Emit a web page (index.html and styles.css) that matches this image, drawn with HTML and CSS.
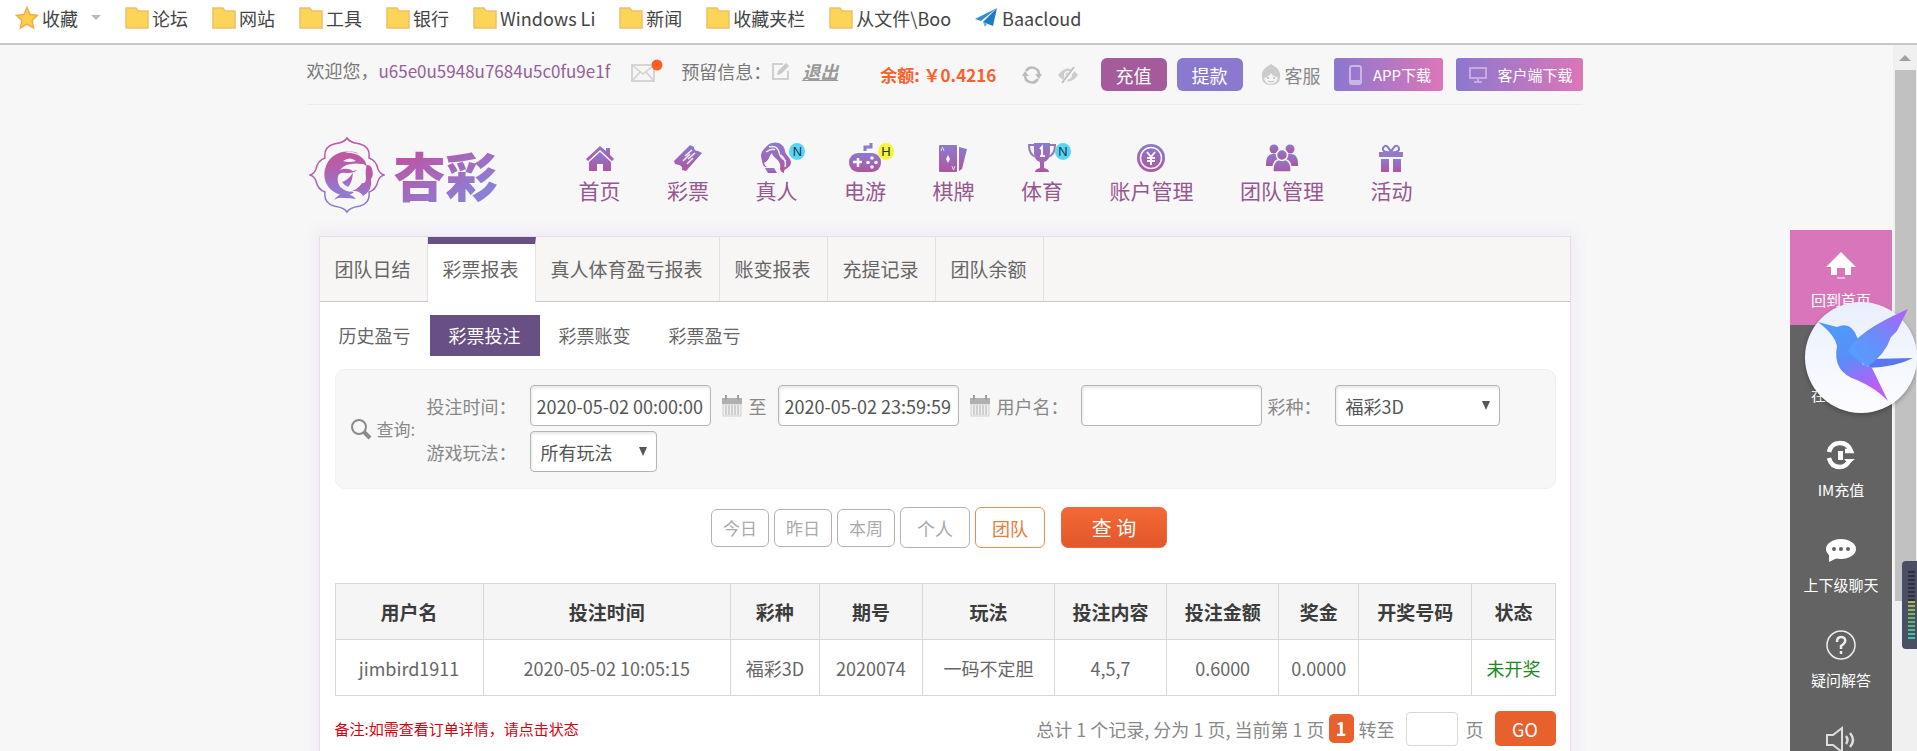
FILE: index.html
```html
<!DOCTYPE html>
<html lang="zh-CN">
<head>
<meta charset="utf-8">
<title>杏彩</title>
<link rel="stylesheet" href="styles.css">
</head>
<body>
<svg class="defs" aria-hidden="true">
  <defs>
    <linearGradient id="g" x1="0" y1="0" x2="0" y2="1"><stop offset="0" stop-color="#8a7bd0"/><stop offset="1" stop-color="#b0559f"/></linearGradient>
    <linearGradient id="gl" x1="0" y1="0" x2="0" y2="1"><stop offset="0" stop-color="#c2559d"/><stop offset=".5" stop-color="#b063b4"/><stop offset="1" stop-color="#8b7fd6"/></linearGradient>
    <linearGradient id="gb" x1="0" y1="0" x2=".4" y2="1"><stop offset="0" stop-color="#4a9ffb"/><stop offset=".55" stop-color="#5b8cf8"/><stop offset="1" stop-color="#c05cf5"/></linearGradient>
    <linearGradient id="gw" x1="0" y1="1" x2="1" y2="0"><stop offset="0" stop-color="#4fa3ff"/><stop offset=".5" stop-color="#6a8cfb"/><stop offset="1" stop-color="#b45ff5"/></linearGradient>
    <symbol id="folder" viewBox="0 0 24 22"><path d="M1 1h10l2 3h10v17H1z" fill="#fbd458" stroke="#f0c068" stroke-width="1.500"/></symbol>
    <symbol id="cal" viewBox="0 0 20 22"><path d="M1 9h18v12H1z" fill="#f0f0f0" stroke="#d0d0d0"/><path d="M0 3h20v6H0z" fill="#b0b0b0"/><path d="M4 0v5M16 0v5" stroke="#a0a0a0" stroke-width="2"/><path d="M4 10v10M7 10v10M10 10v10M13 10v10M16 10v10" stroke="#d0d0d0" stroke-width="2"/></symbol>
  </defs>
</svg>

<nav class="bookmarks">
  <a class="bm bm-star" href="#"><svg width="24" height="24" viewBox="0 0 24 24"><path d="M12 1.500l3.200 7 7.300.9-5.400 5.100 1.500 7.500-6.600-3.800L5.400 22l1.500-7.500L1.500 9.400l7.300-.9z" fill="#fcce4c" stroke="#eeae4a" stroke-width="1.500"/></svg>收藏<span class="caret"></span></a>
  <a class="bm" href="#"><svg width="24" height="22"><use href="#folder"/></svg>论坛</a>
  <a class="bm" href="#"><svg width="24" height="22"><use href="#folder"/></svg>网站</a>
  <a class="bm" href="#"><svg width="24" height="22"><use href="#folder"/></svg>工具</a>
  <a class="bm" href="#"><svg width="24" height="22"><use href="#folder"/></svg>银行</a>
  <a class="bm" href="#"><svg width="24" height="22"><use href="#folder"/></svg>Windows Li</a>
  <a class="bm" href="#"><svg width="24" height="22"><use href="#folder"/></svg>新闻</a>
  <a class="bm" href="#"><svg width="24" height="22"><use href="#folder"/></svg>收藏夹栏</a>
  <a class="bm" href="#"><svg width="24" height="22"><use href="#folder"/></svg>从文件\Boo</a>
  <a class="bm" href="#"><svg width="24" height="22" viewBox="0 0 24 22"><path d="M22 1L0 12l6 2z" fill="#2f8fd0"/><path d="M22 1L8 15l10 4z" fill="#1f7cc0"/><path d="M8 15l2 5 2-3z" fill="#5aaee2"/></svg>Baacloud</a>
</nav>

<div class="view">
  <div class="page">
    <div class="wrap">
      <div class="topbar">
        <span class="hello">欢迎您，<a class="user" href="#">u65e0u5948u7684u5c0fu9e1f</a></span>
        <svg class="mail" width="34" height="24" viewBox="0 0 34 24"><path d="M1 6h22v16H1z" fill="#f5f5f5" stroke="#d5d5d5" stroke-width="2"/><path d="M1 6l11 9 11-9M1 22l8-9M23 22l-8-9" fill="none" stroke="#d0d0d0" stroke-width="1.500"/><circle cx="26" cy="6" r="5.500" fill="#fb5f25"/></svg>
        <span class="reserve">预留信息：</span>
        <svg class="edit" width="18" height="18" viewBox="0 0 18 18"><path d="M11 2H1v15h15V9" fill="none" stroke="#d0d0d0" stroke-width="2"/><path d="M5 13l1-4 8-8 3 3-8 8z" fill="#cacaca"/></svg>
        <a class="logout" href="#">退出</a>
        <strong class="balance">余额: ￥0.4216</strong>
        <svg class="refresh" width="20" height="18" viewBox="0 0 20 18"><path d="M4 5a7 7 0 0 1 13 4M16 13A7 7 0 0 1 3 9" fill="none" stroke="#bbb" stroke-width="2.500"/><path d="M13 8h7l-3 5zM0 10h7L3 5z" fill="#bbb"/></svg>
        <svg class="eye" width="22" height="18" viewBox="0 0 22 18"><path d="M1 9q10-13 20 0-10 13-20 0z" fill="#ccc"/><circle cx="11" cy="9" r="4" fill="#f7f7f7"/><circle cx="11" cy="9" r="2.500" fill="#ccc"/><path d="M6 17L18 1" stroke="#f7f7f7" stroke-width="4"/><path d="M5 17L17 1" stroke="#c0c0c0" stroke-width="2"/></svg>
        <button class="btn recharge">充值</button>
        <button class="btn withdraw">提款</button>
        <a class="service" href="#"><svg width="20" height="22" viewBox="0 0 20 22"><path d="M1 13C0 5 6 3 10 0c4 3 10 5 9 13q0 8-9 8t-9-8z" fill="#cbcbcb"/><path d="M3 14q5-1 7-5 2 4 7 4-1 7-7 7t-7-6z" fill="#f4f4f4"/><circle cx="7" cy="14" r="1" fill="#bbb"/><circle cx="13" cy="14" r="1" fill="#bbb"/><path d="M7 17q3 2 6 0" fill="none" stroke="#bbb"/></svg>客服</a>
        <button class="btn dl dl-app"><svg width="14" height="20" viewBox="0 0 14 20"><rect x="1" y="1" width="11" height="18" rx="2" fill="none" stroke="#c9b5e6" stroke-width="2"/><path d="M1 15h11v3H1z" fill="#c9b5e6"/></svg>APP下载</button>
        <button class="btn dl dl-pc"><svg width="18" height="16" viewBox="0 0 18 16"><path d="M1 1h16v10H1zM9 11v4M5 15h8" fill="none" stroke="#c9a9e0" stroke-width="2"/></svg>客户端下载</button>
      </div>

      <header class="head">
        <a class="logo" href="#">
          <svg width="76" height="76" viewBox="0 0 76 76"><path d="M38 1c3 5 8 5 13 6 7 2 10 7 9 14 6 2 8 6 9 11 1 3 3 5 6 6-3 1-5 3-6 6-1 5-3 9-9 11 1 7-2 12-9 14-5 1-10 1-13 6-3-5-8-5-13-6-7-2-10-7-9-14-6-2-8-6-9-11-1-3-3-5-6-6 3-1 5-3 6-6 1-5 3-9 9-11-1-7 2-12 9-14 5-1 10-1 13-6z" fill="none" stroke="url(#gl)" stroke-width="1.500"/><path d="M50 17C38 11 20 15 16 32c-3 13 5 23 16 26 6 1 10 0 13-3-12 0-18-7-16-16 1-3 4-4 8-3 4 0 8 0 11-3l-4 1q-6-4-13-1 6-8 22-6c3 0 4 2 5 3-1-10-12-15-22-14 4-2 9-2 14 1z" fill="url(#gl)"/><path d="M34 24q7-5 13 0-7 2-13 0z" fill="#f7f7f7"/><path d="M44 36q-1 10-5 14-4-2-6-5 5-1 11-9z" fill="url(#gl)"/><path d="M58 28q4 0 5 4 2 6-1 10 2 11-8 17-3-5-9-5-5 0-10 3 8 0 12 5-6-1-12-1-6-1-10 2 5-7 14-8 10-2 14-9 4 1 4-5-1-9 1-13z" fill="url(#gl)"/></svg>
          <span class="brand">杏彩</span>
        </a>
        <nav class="menu">
          <a href="#"><svg width="30" height="26" viewBox="0 0 30 26"><path d="M15 1L1 14l2 2L15 5l12 11 2-2-4-4V3h-4v3z" fill="url(#g)"/><path d="M4 17L15 7l11 10v9h-8v-7h-6v7H4z" fill="url(#g)"/></svg>首页</a>
          <a href="#"><svg width="30" height="28" viewBox="0 0 30 28"><path d="M1 17L17 1l4 2q0 4 4 4l4 2-16 18-4-1q1-4-3-5l-4-1z" fill="url(#g)"/><path d="M12 12l7-6M15 15l7-6M10 17l7-7M14 20l6-6" fill="none" stroke="#f7f7f7" stroke-width="1.500"/></svg>彩票</a>
          <a href="#"><svg width="32" height="32" viewBox="0 0 32 32"><path d="M8 3C15-2 24 1 25 9c1 5 6 6 6 12-1 6-8 5-7 10-6-2-3-6-4-9-2-6-7-6-8-11-3 3-3 8-8 10q1 3 3 4-4 1-5-6l-1-5C1 9 5 6 8 3z" fill="url(#g)"/><path d="M9 5q8-2 10 5 1 6 7 9M6 10q6-4 9-2M21 13q6 6 4 12" fill="none" stroke="#eee" stroke-width="1.500"/><path d="M5 26h9l3 5H8z" fill="url(#g)"/></svg><i class="badge badge-n">N</i>真人</a>
          <a href="#"><svg width="32" height="32" viewBox="0 0 32 32"><path d="M16 9V5h6V1" fill="none" stroke="#8a7bd0" stroke-width="3"/><rect x="0" y="11" width="32" height="19" rx="9" fill="url(#g)"/><path d="M9 16v9M4 20h9" stroke="#f7f7f7" stroke-width="2.500"/><g fill="#f7f7f7"><circle cx="23" cy="16" r="1.800"/><circle cx="23" cy="25" r="1.800"/><circle cx="19" cy="20.500" r="1.800"/><circle cx="27" cy="20.500" r="1.800"/></g></svg><i class="badge badge-h">H</i>电游</a>
          <a href="#"><svg width="28" height="28" viewBox="0 0 28 28"><rect x="0" y="1" width="18" height="27" rx="1" fill="url(#g)"/><path d="M20 3l8 2-5 20-3 2z" fill="url(#g)"/><path d="M9 11l2 4-2 4-2-4z" fill="#f7f7f7"/><path d="M2 7l1.500-4L5 7M13 22l1.500 4 1.500-4" stroke="#ddd" fill="none"/></svg>棋牌</a>
          <a href="#"><svg width="28" height="32" viewBox="0 0 28 32"><path d="M6 1h16v9q0 8-6 10v6q5 1 5 4H7q0-3 5-4v-6q-6-2-6-10z" fill="url(#g)"/><path d="M6 3H1q0 10 7 12M22 3h5q0 10-7 12" fill="none" stroke="#937abf" stroke-width="2"/><path d="M12 7l2-2v9M12 14h5" fill="none" stroke="#f7f7f7" stroke-width="2"/></svg><i class="badge badge-n">N</i>体育</a>
          <a href="#"><svg width="28" height="30" viewBox="0 0 28 30"><circle cx="14" cy="15" r="14" fill="url(#g)"/><circle cx="14" cy="15" r="10.500" fill="none" stroke="#f7f7f7" stroke-width="1.500"/><path d="M10 9l4 5 4-5M14 14v8M10 15h8M10 18h8" fill="none" stroke="#f7f7f7" stroke-width="2"/></svg>账户管理</a>
          <a href="#"><svg width="32" height="28" viewBox="0 0 32 28"><circle cx="8" cy="5" r="4.500" fill="url(#g)"/><circle cx="24" cy="5" r="4.500" fill="url(#g)"/><path d="M0 20q0-10 7-10h18q7 0 7 10v2H0z" fill="url(#g)"/><g fill="url(#g)" stroke="#f7f7f7" stroke-width="1.500"><path d="M7 28q-1-13 9-13t9 13z"/><circle cx="16" cy="11" r="5.500"/></g></svg>团队管理</a>
          <a href="#"><svg width="24" height="28" viewBox="0 0 24 28"><path d="M12 8Q3 9 4 4q3-6 8 4 5-10 8-4 1 5-8 4z" fill="none" stroke="#8a7bd0" stroke-width="2"/><path d="M0 8h24v5H0z" fill="#957ac4"/><path d="M2 15h8v13H2zM14 15h8v13h-8z" fill="url(#g)"/></svg>活动</a>
        </nav>
      </header>

      <main class="panel">
        <nav class="tabs">
          <a href="#">团队日结</a><a class="on" href="#">彩票报表</a><a href="#">真人体育盈亏报表</a><a href="#">账变报表</a><a href="#">充提记录</a><a href="#">团队余额</a>
        </nav>
        <nav class="subtabs">
          <a href="#">历史盈亏</a><a class="on" href="#">彩票投注</a><a href="#">彩票账变</a><a href="#">彩票盈亏</a>
        </nav>
        <form class="content">
          <div class="filter">
            <div class="ftitle"><svg width="22" height="22" viewBox="0 0 22 22"><circle cx="9" cy="9" r="7" fill="none" stroke="#8a8a8a" stroke-width="2"/><path d="M14 14l6 6" stroke="#8a8a8a" stroke-width="4"/></svg>查询:</div>
            <div class="frows">
              <div class="frow">
                <label class="first" for="t1">投注时间：</label><input class="field" id="t1" value="2020-05-02 00:00:00">
                <svg class="cal" width="20" height="22"><use href="#cal"/></svg>
                <label class="to" for="t2">至</label><input class="field" id="t2" value="2020-05-02 23:59:59">
                <svg class="cal" width="20" height="22"><use href="#cal"/></svg>
                <label class="name" for="un">用户名：</label><input class="field" id="un">
                <label class="kind" for="kind">彩种：</label><span class="pick pick-kind"><select id="kind"><option>福彩3D</option></select></span>
              </div>
              <div class="frow">
                <label class="first" for="play">游戏玩法：</label><span class="pick pick-play"><select id="play"><option>所有玩法</option></select></span>
              </div>
            </div>
          </div>

          <div class="actions">
            <button type="button" class="day">今日</button><button type="button" class="day">昨日</button><button type="button" class="day">本周</button><button type="button" class="scope">个人</button><button type="button" class="scope on">团队</button><button type="button" class="query">查 询</button>
          </div>

          <table class="grid">
            <colgroup><col class="c1"><col class="c2"><col class="c3"><col class="c4"><col class="c5"><col class="c6"><col class="c6"><col class="c8"><col class="c9"><col class="c10"></colgroup>
            <thead><tr><th>用户名</th><th>投注时间</th><th>彩种</th><th>期号</th><th>玩法</th><th>投注内容</th><th>投注金额</th><th>奖金</th><th>开奖号码</th><th>状态</th></tr></thead>
            <tbody><tr><td>jimbird1911</td><td>2020-05-02 10:05:15</td><td>福彩3D</td><td>2020074</td><td>一码不定胆</td><td>4,5,7</td><td>0.6000</td><td>0.0000</td><td></td><td><a class="state" href="#">未开奖</a></td></tr></tbody>
          </table>

          <div class="foot">
            <p class="note">备注:如需查看订单详情，请点击状态</p>
            <div class="pager">
              <span>总计 1 个记录, 分为 1 页, 当前第 1 页</span><b class="cur">1</b><label for="pg">转至</label><input class="pg" id="pg"><span class="unit">页</span><button type="button" class="go">GO</button>
            </div>
          </div>
        </form>
      </main>
    </div>
  </div>

  <div class="scroll"><span class="up"></span><span class="thumb"></span></div>

  <aside class="side">
    <a class="home" href="#"><svg width="30" height="28" viewBox="0 0 30 28"><path d="M15 1l15 15h-5v8h-6v-7h-8v7H5v-8H0z" fill="#fff"/><path d="M11 27h8" stroke="#fff"/></svg>回到首页</a>
    <a href="#"><svg width="30" height="28" viewBox="0 0 30 28"><circle cx="15" cy="14" r="12" fill="none" stroke="#fff" stroke-width="3"/></svg>在线客服</a>
    <a href="#"><svg width="30" height="30" viewBox="0 0 30 30"><path d="M3 12Q5 3 14 3q8 0 11 8h-6M3 18q2 9 11 9 6 0 9-6" fill="none" stroke="#fff" stroke-width="4.500"/><path d="M12 11h5v9h-5zM18 19h11l-6 5z" fill="#fff"/></svg>IM充值</a>
    <a href="#"><svg width="32" height="28" viewBox="0 0 32 28"><ellipse cx="16" cy="13" rx="15" ry="10" fill="#fff"/><path d="M4 18v8l10-5z" fill="#fff"/><g fill="#636363"><circle cx="9" cy="13" r="2"/><circle cx="16" cy="13" r="2"/><circle cx="23" cy="13" r="2"/></g></svg>上下级聊天</a>
    <a href="#"><svg width="30" height="30" viewBox="0 0 30 30"><circle cx="15" cy="15" r="14" fill="none" stroke="#eee" stroke-width="1.500"/><path d="M11 12q0-5 4-5 5 0 4 5-1 2-4 4v3M15 21v3" fill="none" stroke="#eee" stroke-width="2.500"/></svg>疑问解答</a>
    <a href="#" aria-label="公告"><svg width="30" height="28" viewBox="0 0 30 28"><path d="M1 9h6l9-7v24l-9-7H1z" fill="none" stroke="#ddd" stroke-width="2"/><path d="M20 10q3 4 0 8M24 7q6 7 0 14" fill="none" stroke="#ddd" stroke-width="2.500"/></svg></a>
  </aside>
  <div class="bird"><svg width="112" height="112" viewBox="0 0 112 112"><path d="M66 57l42-1q-17 9-45 10z" fill="#5a75ee"/><path d="M13 20l19 5q14-6 20 10l7 12-2 15 10 4 16 33Q72 87 52 78 27 70 32 44q-2-11-19-24z" fill="url(#gb)"/><path d="M43 50Q50 30 103 7L92 29l-6 6Q80 53 62 65z" fill="url(#gw)"/></svg></div>
  <div class="meter"><span class="off"></span><span class="lit"></span></div>
</div>
</body>
</html>
```
FILE: styles.css
```css
* { box-sizing: border-box; }
body {
  margin: 0;
  height: 100vh;
  display: flex;
  flex-direction: column;
  overflow: hidden;
  background: #f7f7f7;
  color: #666;
  font: 18px/24px "Noto Sans CJK SC", "Noto Sans", sans-serif;
}
a { color: inherit; text-decoration: none; }
button, input, select { font: inherit; color: inherit; margin: 0; }
button { border: 0; padding: 0; white-space: nowrap; }
svg { display: block; flex: none; }
.defs { position: absolute; width: 0; height: 0; }

.bookmarks {
  display: flex;
  gap: 24px;
  height: 45px;
  padding: 0 15px 8px;
  background: #fff;
  border-bottom: 2px solid #c8c8c8;
  flex: none;
  color: #444;
}
.bm { display: flex; align-items: center; gap: 3px; white-space: nowrap; }
.caret { margin-left: 10px; border: 5px solid transparent; border-top-color: #bbb; border-bottom: 0; }

.view { position: relative; flex: 1; min-height: 0; display: flex; }
.page { flex: 1; min-width: 0; padding-right: 4px; overflow: hidden; }
.wrap { max-width: 1276px; margin: 0 auto; }

.topbar {
  display: flex;
  align-items: center;
  height: 60px;
  border-bottom: 1px solid #ececec;
  white-space: nowrap;
  color: #777;
}
.hello, .reserve, .logout, .mail, .edit { margin-bottom: 8px; }
.user { color: #955f98; font-size: 17px; }
.mail { margin-left: 21px; }
.reserve { margin-left: 16px; }
.edit { margin-left: 1px; }
.logout { margin-left: 12px; font-weight: 700; font-style: italic; text-decoration: underline; color: #999; }
.balance { margin-left: 42px; font-size: 17px; color: #fb5f2b; }
.refresh { margin-left: auto; }
.eye { margin: 0 22px 0 15px; }
.btn { height: 33px; border-radius: 6px; color: #fff; }
.recharge { width: 66px; background: #a55a9b; }
.withdraw { width: 66px; margin-left: 10px; background: #8b78cf; }
.service { display: flex; align-items: center; gap: 4px; margin: 0 13px 0 18px; color: #888; }
.dl {
  display: flex;
  align-items: center;
  justify-content: center;
  padding-left: 4px;
  font-size: 15px;
  border-radius: 3px;
  background: linear-gradient(90deg, #8b78cf, #dc76b8);
}
.dl-app { width: 109px; gap: 10px; }
.dl-pc { width: 127px; margin-left: 13px; gap: 10px; }

.head { display: flex; align-items: center; height: 131px; padding: 6px 170px 2px 2px; }
.logo { display: flex; align-items: center; gap: 9px; margin-top: 4px; }
.brand {
  font-size: 52px;
  line-height: 64px;
  font-weight: 900;
  background: linear-gradient(150deg, #b958a8 20%, #8b7fd6 80%);
  -webkit-background-clip: text;
  background-clip: text;
  color: transparent;
}
.menu { flex: 1; display: flex; justify-content: space-between; margin-left: 81px; }
.menu a {
  position: relative;
  display: flex;
  flex-direction: column;
  align-items: center;
  font-size: 21px;
  line-height: 28px;
  color: #96588f;
  white-space: nowrap;
}
.menu svg { height: 32px; margin-bottom: 2px; }
.badge {
  position: absolute;
  left: 34px;
  top: 1px;
  width: 16px;
  height: 17px;
  border-radius: 50%;
  background: #55d5f8;
  color: #234;
  font: 13px/17px "Liberation Sans", sans-serif;
  text-align: center;
}
.badge-h { background: #f8f33c; }

.panel {
  margin: 0 12px;
  height: 600px;
  background: #fff;
  border: 1px solid #e6dcec;
  box-shadow: 0 0 14px 4px #efeaf4;
}
.tabs { display: flex; height: 65px; background: #f7f6f5; border-bottom: 1px solid #c8c8c8; }
.tabs a {
  padding: 15px 16px 0 15px;
  font-size: 19px;
  line-height: 34px;
  white-space: nowrap;
  border-right: 1px solid #e2e2e2;
}
.tabs .on { background: #fff; border-top: 7px solid #684f84; padding-top: 8px; height: 65px; }
.subtabs { display: flex; padding-top: 13px; }
.subtabs a { padding: 0 19px; line-height: 41px; }
.subtabs .on { background: #684f84; color: #fff; }
.content { padding: 13px 14px 0 15px; }

.filter {
  display: flex;
  align-items: center;
  height: 120px;
  padding-left: 14px;
  border: 1px solid #f0f0f0;
  border-radius: 10px;
  background: #f7f7f7;
  color: #888;
  white-space: nowrap;
}
.ftitle { display: flex; align-items: center; gap: 5px; width: 77px; font-size: 17px; }
.frows { display: flex; flex-direction: column; gap: 5px; padding-bottom: 1px; }
.frow { display: flex; align-items: center; }
.first { width: 103px; }
.field, .pick {
  height: 41px;
  border: 1px solid #b5b5b5;
  border-radius: 4px;
  background: #fff;
  box-shadow: inset 1px 2px 3px #e8e8e8;
  color: #555;
}
.field { width: 181px; padding: 0 6px; font-size: 18px; }
.cal { margin: 0 7px 0 11px; }
.to { width: 29px; }
.name { width: 84px; }
.kind { width: 73px; padding-left: 6px; }
.pick { position: relative; display: block; }
.pick::after {
  content: "";
  position: absolute;
  right: 9px;
  top: 15px;
  border: 4px solid transparent;
  border-top: 9px solid #555;
  border-bottom: 0;
}
.pick select { width: 100%; height: 39px; padding: 0 10px; border: 0; background: none; appearance: none; }
.pick-kind { width: 165px; }
.pick-play { width: 127px; }

.actions { display: flex; justify-content: center; align-items: center; gap: 5px; padding: 18px 12px 0 0; }
.actions button { border: 1px solid #b2b2b2; border-radius: 6px; background: #fff; color: #aaa; }
.actions .day { width: 58px; height: 38px; font-size: 17px; }
.actions .scope { width: 70px; height: 41px; }
.actions .on { border-color: #ee8b4e; color: #e87d3c; }
.actions .query {
  width: 106px;
  height: 41px;
  margin-left: 11px;
  border: 1px solid #ee6a3c;
  border-radius: 7px;
  background: linear-gradient(#f26a36, #e2572a);
  color: #fff;
  font-size: 20px;
}

.grid { width: 100%; margin-top: 35px; border-collapse: collapse; table-layout: fixed; text-align: center; }
.grid th, .grid td { height: 56px; padding: 0; border: 1px solid #d8d8d8; white-space: nowrap; }
.grid th { background: #f5f5f5; color: #3c3c3c; font-size: 19px; }
.grid td { font-size: 18px; }
.c1 { width: 148px; }
.c2 { width: 247px; }
.c3 { width: 89px; }
.c4 { width: 103px; }
.c5 { width: 132px; }
.c6 { width: 112px; }
.c8 { width: 80px; }
.c9 { width: 113px; }
.c10 { width: 83px; }
.state { color: #1c8a1c; }

.foot { display: flex; align-items: center; justify-content: space-between; padding-top: 15px; white-space: nowrap; }
.note { margin: 0; font-size: 15px; color: #d6000f; }
.pager { display: flex; align-items: center; color: #888; }
.cur { width: 25px; margin: 0 5px 0 4px; border-radius: 5px; background: #e8602c; color: #fff; line-height: 29px; text-align: center; }
.pg { width: 52px; height: 34px; margin: 0 8px 0 11px; border: 1px solid #d8d8d8; border-radius: 4px; }
.go { width: 61px; height: 35px; margin-left: 11px; border-radius: 5px; background: #e8602c; color: #fff; }

.scroll { width: 24px; background: #f0f0f0; display: flex; flex-direction: column; align-items: center; padding-top: 10px; }
.up { border: 6px solid transparent; border-bottom: 6px solid #a0a0a0; border-top: 0; }
.thumb { width: 21px; height: 531px; margin-top: 9px; background: #c1c1c1; }

.side { position: absolute; right: 25px; top: 185px; bottom: 0; width: 102px; background: #636363; overflow: hidden; }
.side a {
  display: flex;
  flex-direction: column;
  align-items: center;
  gap: 8px;
  height: 95px;
  padding-top: 20px;
  color: #fff;
  font-size: 15px;
  line-height: 24px;
}
.side svg { height: 30px; }
.side .home { background: #d976bb; }
.bird {
  position: absolute;
  right: 0;
  top: 257px;
  width: 112px;
  height: 111px;
  border-radius: 50%;
  background: linear-gradient(#e8effc, #fdfdff);
  box-shadow: 0 2px 5px #0004;
}
.meter {
  position: absolute;
  right: 0;
  top: 516px;
  width: 15px;
  height: 88px;
  padding: 10px 2px 9px 6px;
  display: flex;
  flex-direction: column;
  border-radius: 4px 0 0 4px;
  background: #4a4f63;
}
.off { height: 30px; background: repeating-linear-gradient(#2c3040 0 2px, #4a4f63 2px 4px); }
.lit {
  flex: 1;
  background: repeating-linear-gradient(#4a4f6300 0 2px, #4a4f63 2px 4px), linear-gradient(#b5b846, #5fb86a, #35c8b4);
}
```
